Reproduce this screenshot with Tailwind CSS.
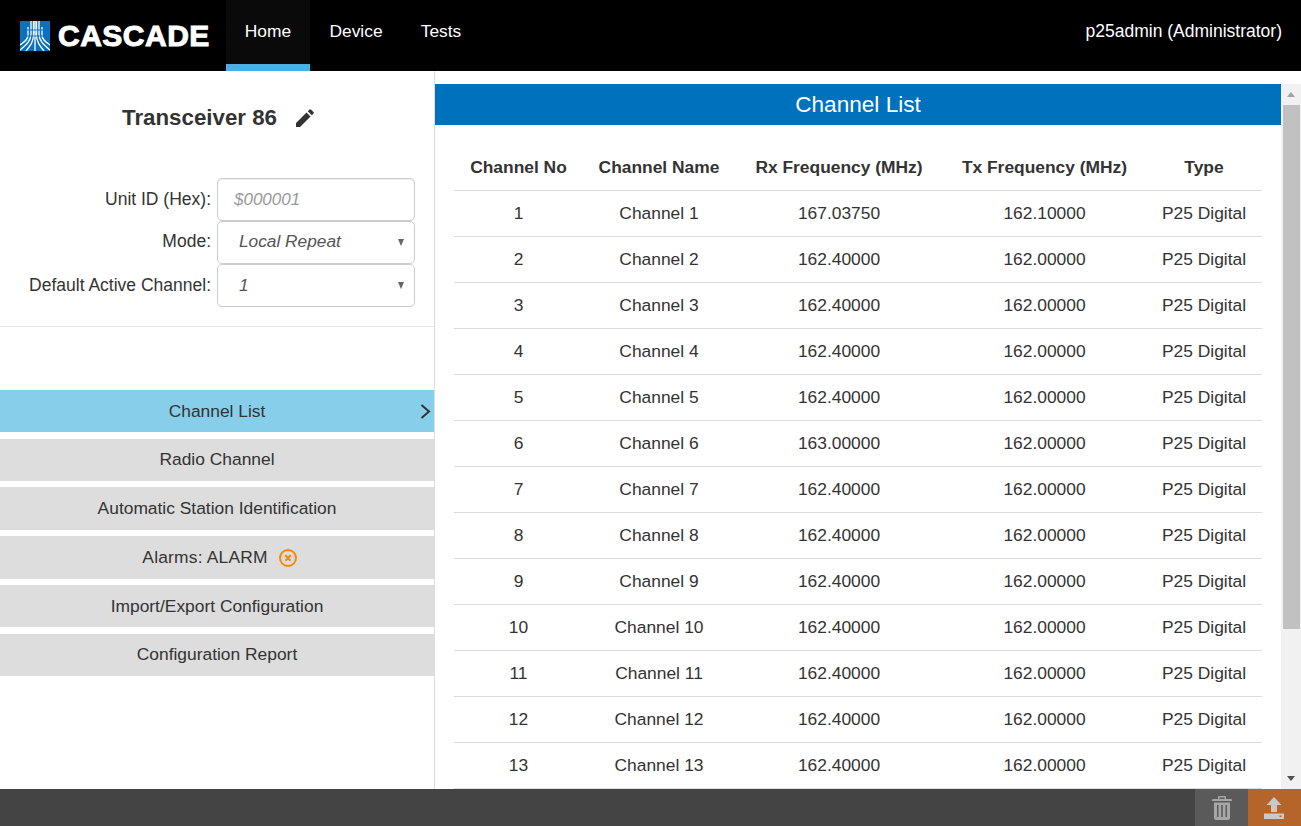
<!DOCTYPE html>
<html>
<head>
<meta charset="utf-8">
<script src="https://cdn.jsdelivr.net/npm/@tailwindcss/browser@4"></script>
</head>
<body class="m-0 overflow-hidden bg-white font-['Liberation_Sans',Arial,sans-serif] text-[#333]">
<div class="flex h-[826px] w-[1301px] flex-col overflow-hidden">
  <header class="flex h-[71px] shrink-0 items-stretch bg-black text-white">
    <div class="flex w-[226px] shrink-0 items-center pl-[20px]">
      <svg width="30" height="30" viewBox="0 0 30 30" class="shrink-0">
        <rect width="30" height="30" fill="#0a72bd"/>
        <g fill="none" stroke="#fff" stroke-width="1.3">
          <path d="M11 0V13C11 20 6 24 0 29"/>
          <path d="M13.500 0V14C13.500 21 10 25 6 30"/>
          <path d="M16.500 0V14C16.500 21 20 25 24 30"/>
          <path d="M19 0V13C19 20 24 24 30 29"/>
          <path d="M8 6V14C8 19 4 21 0 24"/>
          <path d="M22 6V14C22 19 26 21 30 24"/>
          <path d="M15 0V30"/>
          <path d="M6 9H24M5 15H25" stroke="#0a72bd" stroke-width="1"/>
        </g>
      </svg>
      <span class="ml-[8px] text-[30px] leading-none font-bold tracking-[0.5px]" style="-webkit-text-stroke:1px #fff">CASCADE</span>
    </div>
    <nav class="flex items-stretch text-[17.4px]">
      <a class="flex w-[84px] items-center justify-center border-b-[7px] border-[#4aaee8] bg-[#0a0a0a] pb-[1px]">Home</a>
      <a class="flex w-[92px] items-center justify-center pb-[8px]">Device</a>
      <a class="flex w-[78px] items-center justify-center pb-[8px]">Tests</a>
    </nav>
    <div class="ml-auto flex items-center pb-[8px] pr-[19px] text-[17.5px]">p25admin (Administrator)</div>
  </header>

  <div class="flex min-h-0 flex-1">
    <aside class="flex w-[435px] shrink-0 flex-col border-r border-[#ddd]">
      <div class="flex h-[94px] shrink-0 items-center justify-center pl-[2px]">
        <h1 class="text-[22.3px] leading-none font-bold text-[#333]">Transceiver 86</h1>
        <svg width="18" height="18" viewBox="0 0 18 18" class="ml-[19px]"><path fill="#333" d="M0 18v-4L10.500 3.500l4 4L4 18zM11.800 2.200L13.500.5a1 1 0 0 1 1.400 0l2.600 2.600a1 1 0 0 1 0 1.400l-1.700 1.700z"/></svg>
      </div>
      <div class="mt-[13px] flex flex-col">
        <div class="flex h-[43px] items-center">
          <label class="w-[211px] text-right text-[17.5px]">Unit ID (Hex):</label>
          <div class="ml-[6px] flex h-[43px] w-[198px] items-center rounded-[5px] border border-[#ccc] pl-[16px] text-[17px] text-[#999] italic shadow-[inset_0_1px_1px_rgba(0,0,0,0.075)]">$000001</div>
        </div>
        <div class="flex h-[43px] items-center">
          <label class="w-[211px] pb-[2px] text-right text-[17.5px]">Mode:</label>
          <div class="relative ml-[6px] flex h-[43px] w-[198px] items-center rounded-[5px] border border-[#ccc] pb-[2px] pl-[21px] text-[17.3px] text-[#555] italic">Local Repeat<span class="absolute right-[10px] top-[17px] h-0 w-0 border-x-[3.5px] border-t-[7px] border-x-transparent border-t-[#666]"></span></div>
        </div>
        <div class="flex h-[43px] items-center">
          <label class="w-[211px] text-right text-[17.5px]">Default Active Channel:</label>
          <div class="relative ml-[6px] flex h-[43px] w-[198px] items-center rounded-[5px] border border-[#ccc] pl-[21px] text-[17.3px] text-[#555] italic">1<span class="absolute right-[10px] top-[17px] h-0 w-0 border-x-[3.5px] border-t-[7px] border-x-transparent border-t-[#666]"></span></div>
        </div>
      </div>
      <div class="mt-[19px] h-px bg-[#e5e5e5]"></div>
      <div class="mt-[63px] flex flex-col text-[17.4px]">
        <a class="relative flex h-[42px] items-center justify-center bg-[#87ceeb]">Channel List
          <svg width="11" height="15" viewBox="0 0 11 15" class="absolute right-[3px] top-[14px]"><path d="M1.500 1l7.500 6.500-7.500 6.500" fill="none" stroke="#333" stroke-width="2"/></svg>
        </a>
        <a class="mt-[7px] flex h-[42px] items-center justify-center bg-[#ddd] pb-[2px]">Radio Channel</a>
        <a class="mt-[6px] flex h-[43px] items-center justify-center bg-[#ddd]">Automatic Station Identification</a>
        <a class="mt-[6px] flex h-[43px] items-center justify-center bg-[#ddd] pl-[6px]"><span class="tracking-[0.2px]">Alarms: ALARM</span>
          <svg width="20" height="20" viewBox="0 0 20 20" class="ml-[10px]"><circle cx="10" cy="10" r="8" fill="none" stroke="#f58a0b" stroke-width="2"/><path d="M7.300 7.300l5.400 5.400M12.700 7.300l-5.400 5.400" stroke="#f58a0b" stroke-width="2"/></svg>
        </a>
        <a class="mt-[6px] flex h-[42px] items-center justify-center bg-[#ddd]">Import/Export Configuration</a>
        <a class="mt-[7px] flex h-[42px] items-center justify-center bg-[#ddd] pb-[2px]">Configuration Report</a>
      </div>
    </aside>

    <main class="mt-[13px] flex min-w-0 flex-1">
      <div class="min-w-0 flex-1 overflow-hidden">
        <div class="flex h-[41px] items-center justify-center bg-[#0071bc] text-[22.6px] text-white">Channel List</div>
        <div class="px-[19px] pt-[20px]">
          <table class="w-[808px] table-fixed border-collapse text-center text-[17.4px]">
            <colgroup>
              <col class="w-[129px]"><col class="w-[152px]"><col class="w-[208px]"><col class="w-[203px]"><col class="w-[116px]">
            </colgroup>
            <thead>
              <tr class="h-[45px] border-b border-[#ddd] font-bold"><th class="pb-[1px]">Channel No</th><th class="pb-[1px]">Channel Name</th><th class="pb-[1px]">Rx Frequency (MHz)</th><th class="pb-[1px]">Tx Frequency (MHz)</th><th class="pb-[1px]">Type</th></tr>
            </thead>
            <tbody>
              <tr class="h-[46px] border-b border-[#ddd]"><td>1</td><td>Channel 1</td><td>167.03750</td><td>162.10000</td><td>P25 Digital</td></tr>
              <tr class="h-[46px] border-b border-[#ddd]"><td>2</td><td>Channel 2</td><td>162.40000</td><td>162.00000</td><td>P25 Digital</td></tr>
              <tr class="h-[46px] border-b border-[#ddd]"><td>3</td><td>Channel 3</td><td>162.40000</td><td>162.00000</td><td>P25 Digital</td></tr>
              <tr class="h-[46px] border-b border-[#ddd]"><td>4</td><td>Channel 4</td><td>162.40000</td><td>162.00000</td><td>P25 Digital</td></tr>
              <tr class="h-[46px] border-b border-[#ddd]"><td>5</td><td>Channel 5</td><td>162.40000</td><td>162.00000</td><td>P25 Digital</td></tr>
              <tr class="h-[46px] border-b border-[#ddd]"><td>6</td><td>Channel 6</td><td>163.00000</td><td>162.00000</td><td>P25 Digital</td></tr>
              <tr class="h-[46px] border-b border-[#ddd]"><td>7</td><td>Channel 7</td><td>162.40000</td><td>162.00000</td><td>P25 Digital</td></tr>
              <tr class="h-[46px] border-b border-[#ddd]"><td>8</td><td>Channel 8</td><td>162.40000</td><td>162.00000</td><td>P25 Digital</td></tr>
              <tr class="h-[46px] border-b border-[#ddd]"><td>9</td><td>Channel 9</td><td>162.40000</td><td>162.00000</td><td>P25 Digital</td></tr>
              <tr class="h-[46px] border-b border-[#ddd]"><td>10</td><td>Channel 10</td><td>162.40000</td><td>162.00000</td><td>P25 Digital</td></tr>
              <tr class="h-[46px] border-b border-[#ddd]"><td>11</td><td>Channel 11</td><td>162.40000</td><td>162.00000</td><td>P25 Digital</td></tr>
              <tr class="h-[46px] border-b border-[#ddd]"><td>12</td><td>Channel 12</td><td>162.40000</td><td>162.00000</td><td>P25 Digital</td></tr>
              <tr class="h-[46px] border-b border-[#ddd]"><td>13</td><td>Channel 13</td><td>162.40000</td><td>162.00000</td><td>P25 Digital</td></tr>
            </tbody>
          </table>
        </div>
      </div>
      <div class="flex w-[20px] shrink-0 flex-col bg-[#f1f1f1]">
        <div class="flex h-[21px] items-center justify-center"><span class="h-0 w-0 border-x-[4.5px] border-b-[5px] border-x-transparent border-b-[#a3a3a3]"></span></div>
        <div class="ml-[2px] h-[524px] w-[17px] bg-[#c1c1c1]"></div>
        <div class="mt-auto flex h-[21px] items-center justify-center"><span class="h-0 w-0 border-x-[4.5px] border-t-[5px] border-x-transparent border-t-[#505050]"></span></div>
      </div>
    </main>
  </div>

  <footer class="flex h-[37px] shrink-0 justify-end bg-[#444]">
    <div class="flex w-[53px] items-center justify-center bg-[#5a5a5a]">
      <svg width="20" height="24" viewBox="0 0 20 24"><path fill="#a6a6a6" d="M7 0h6a1 1 0 0 1 1 1v2h5a1 1 0 0 1 1 1v1H0V4a1 1 0 0 1 1-1h5V1a1 1 0 0 1 1-1zm.5 1.500V3h5V1.500zM2 6.500h16V22a2 2 0 0 1-2 2H4a2 2 0 0 1-2-2zM5 9v12h1.500V9zm4.200 0v12h1.600V9zm4.300 0v12H15V9z" fill-rule="evenodd"/></svg>
    </div>
    <div class="flex w-[53px] items-center justify-center bg-[#b5652a] pr-[1px]">
      <svg width="20" height="22" viewBox="0 0 20 22"><path fill="#c9c9c9" d="M10 0l7.500 8H13v7H7V8H2.500zM0 16.500h20V22H0z"/><rect x="15.500" y="18.500" width="2" height="1.500" fill="#b5652a"/></svg>
    </div>
  </footer>
</div>
</body>
</html>
